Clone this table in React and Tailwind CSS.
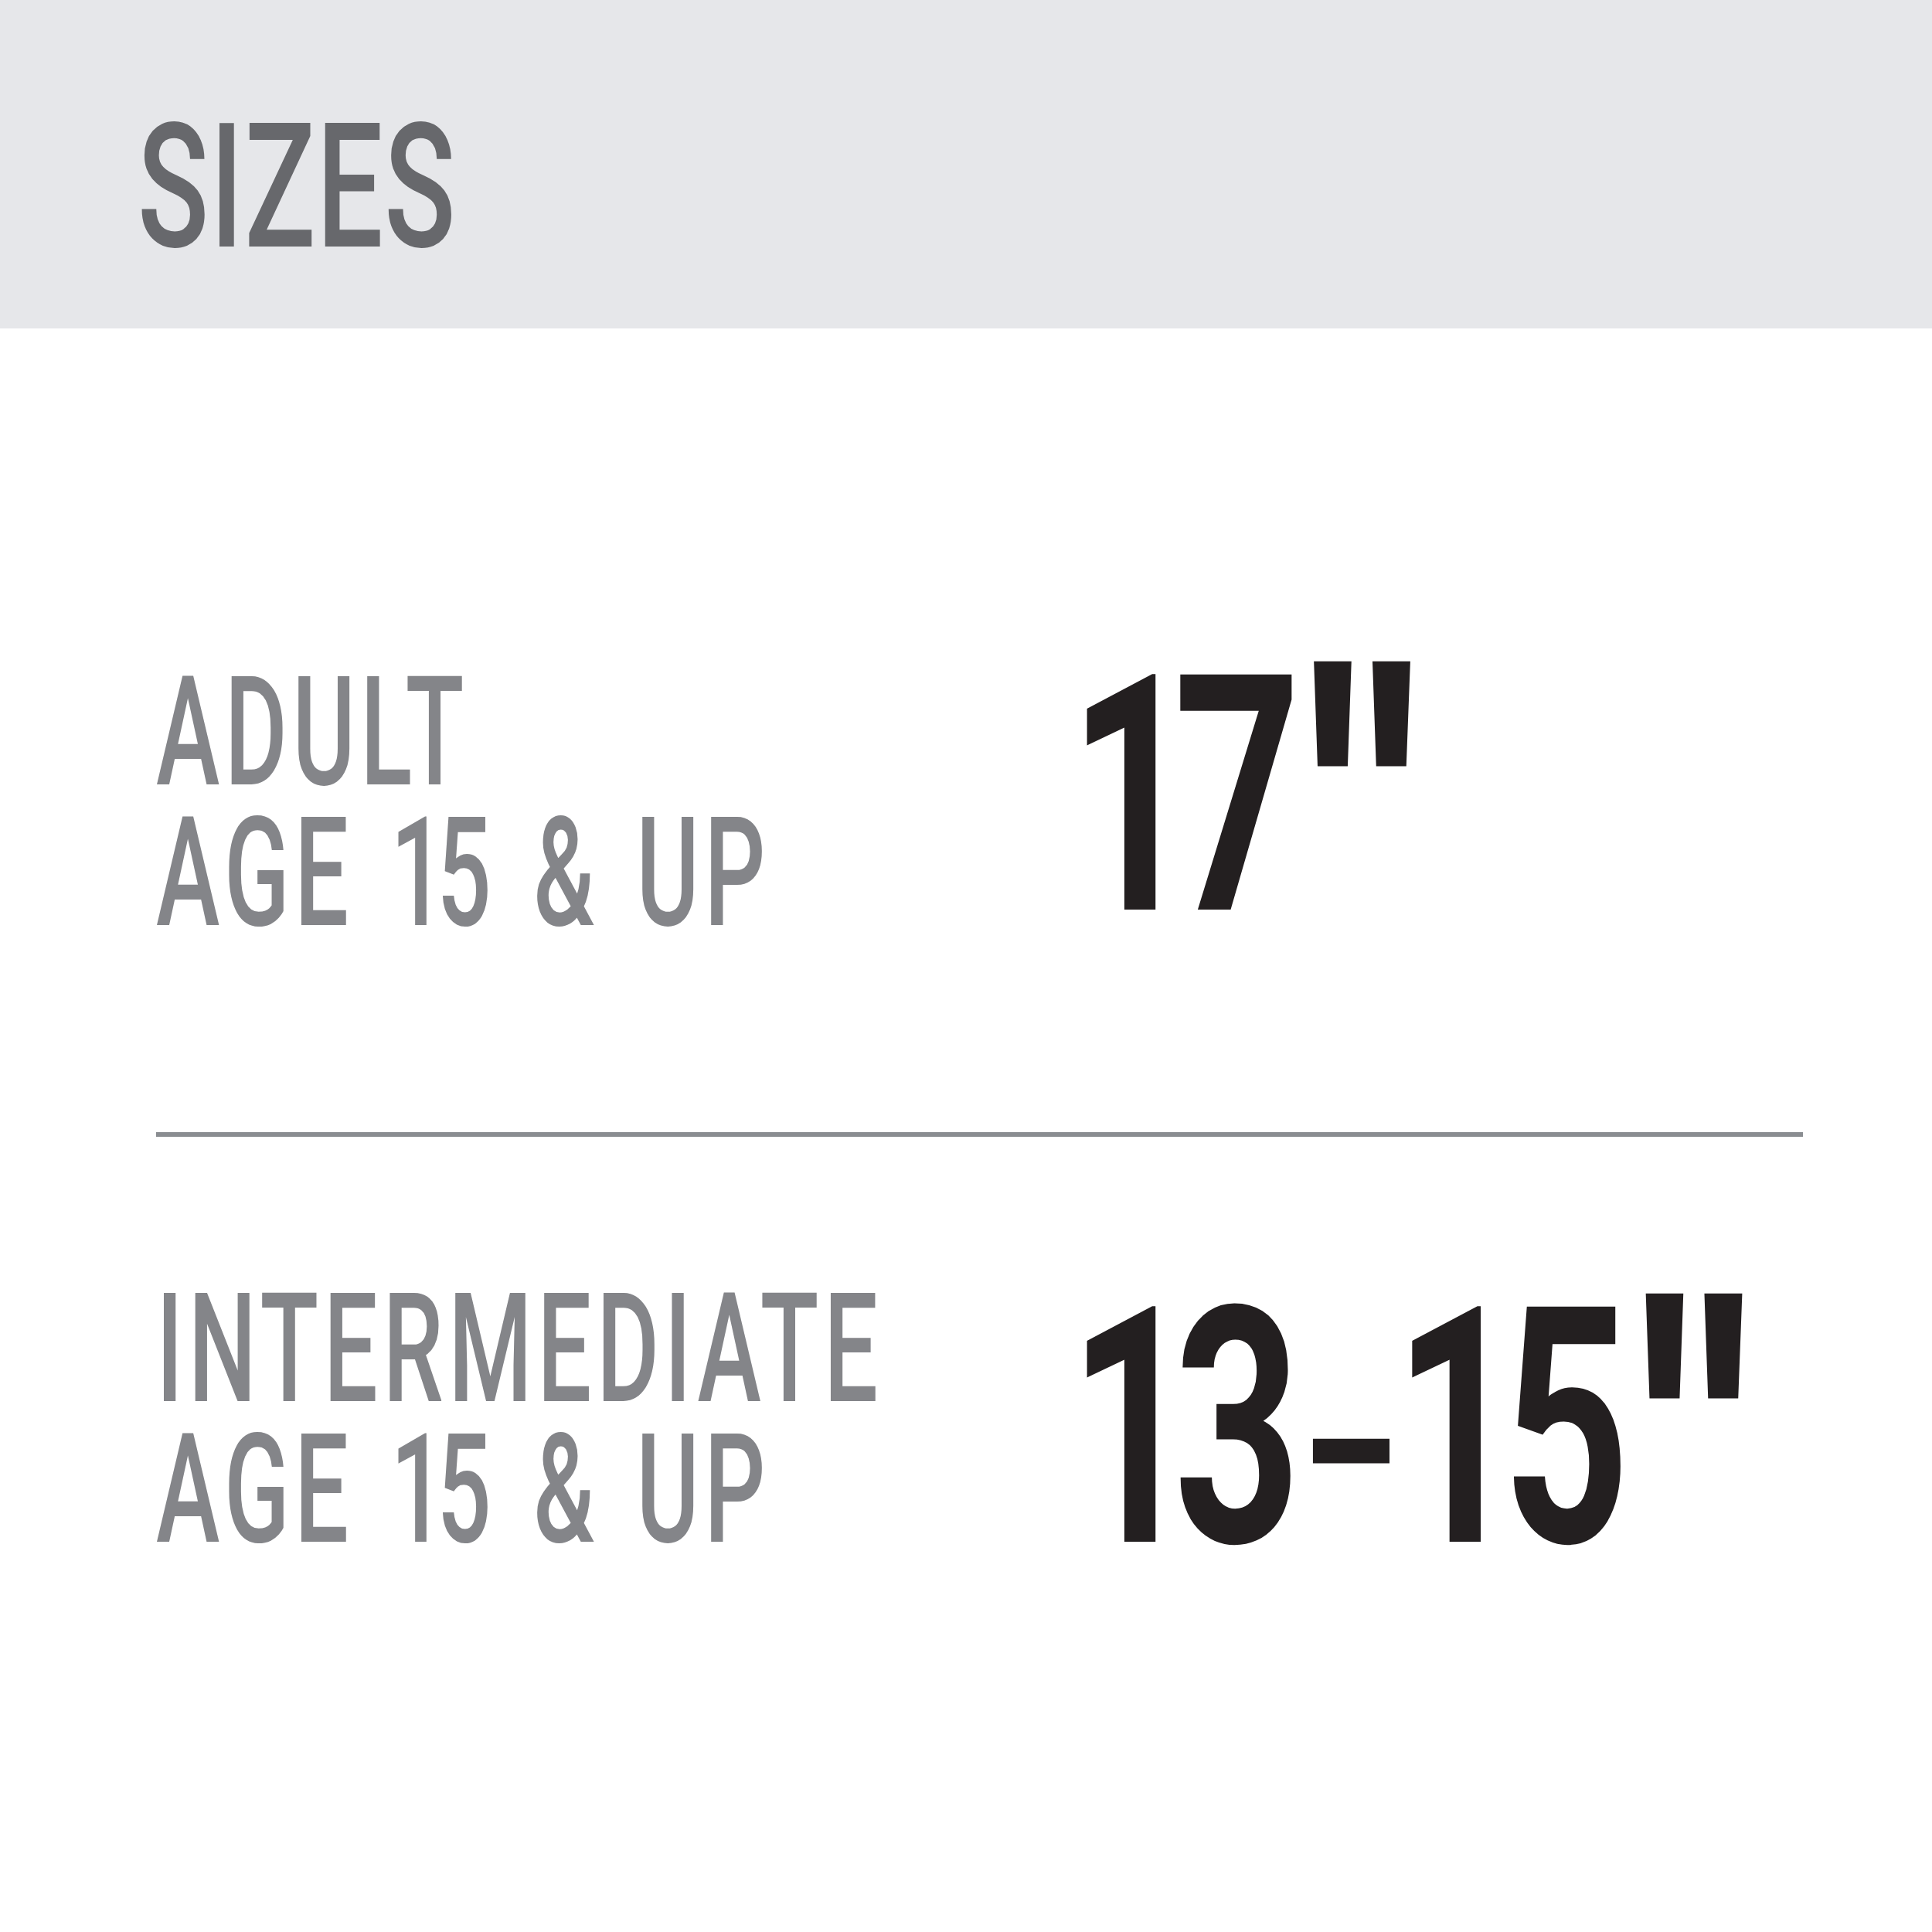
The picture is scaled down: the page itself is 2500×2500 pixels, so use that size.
import React from "react";

const labelCls =
  "origin-top-left scale-x-[0.63] whitespace-nowrap [font-family:Roboto,Liberation_Sans,sans-serif] font-medium text-[197px] leading-[182px] tracking-[0.053em] [word-spacing:16px] text-[#848589]";

const numCls =
  "flex items-start origin-left scale-x-[0.67] whitespace-nowrap [font-family:Roboto,Liberation_Sans,sans-serif] font-bold text-[#231f20]";

const quoteCls =
  "h-[200px] [font-family:Liberation_Sans,Arimo,Arial,sans-serif] font-bold text-[544px] leading-none -mt-[47px]";

function AgeLine() {
  return (
    <div>
      AGE <span className="tracking-[-0.085em]">1</span>5 &amp; UP
    </div>
  );
}

export default function App() {
  return (
    <div className="w-[2500px] min-h-[2500px] bg-white">
      <header className="h-[425px] bg-[#e6e7ea] pl-[178px] pt-[131px]">
        <h1 className="inline-block origin-left scale-x-[0.68] whitespace-nowrap [font-family:Roboto,Liberation_Sans,sans-serif] font-medium text-[224px] leading-none tracking-[0.01em] text-[#67686c]">
          SIZES
        </h1>
      </header>

      <section className="flex h-[817px] pl-[202px] pt-[392px]">
        <div className="w-[1181px] shrink-0 mt-[40px]">
          <div className={labelCls}>
            <div>ADULT</div>
            <AgeLine />
          </div>
        </div>
        <div className={numCls}>
          <span className="h-[428px] text-[428px] leading-none tracking-[-0.1em]">17</span>
          <span className={`${quoteCls} ml-[32px]`}>"</span>
        </div>
      </section>

      <div className="ml-[202px] mt-[223px] w-[2131px] h-[6px] bg-[#8a8d91]" />

      <section className="flex h-[700px] pl-[202px] pt-[164px]">
        <div className="w-[1181px] shrink-0 mt-[20px]">
          <div className={labelCls}>
            <div>INTERMEDIATE</div>
            <AgeLine />
          </div>
        </div>
        <div className={numCls}>
          <span className="h-[428px] text-[428px] leading-none tracking-[-0.1em]">
            13
            <span className="inline-block font-normal scale-x-[1.45] translate-y-[12px] ml-[71px] mr-[76px]">-</span>
            1<span className="ml-[7px]">5</span>
          </span>
          <span className={`${quoteCls} ml-[38px]`}>"</span>
        </div>
      </section>
    </div>
  );
}
